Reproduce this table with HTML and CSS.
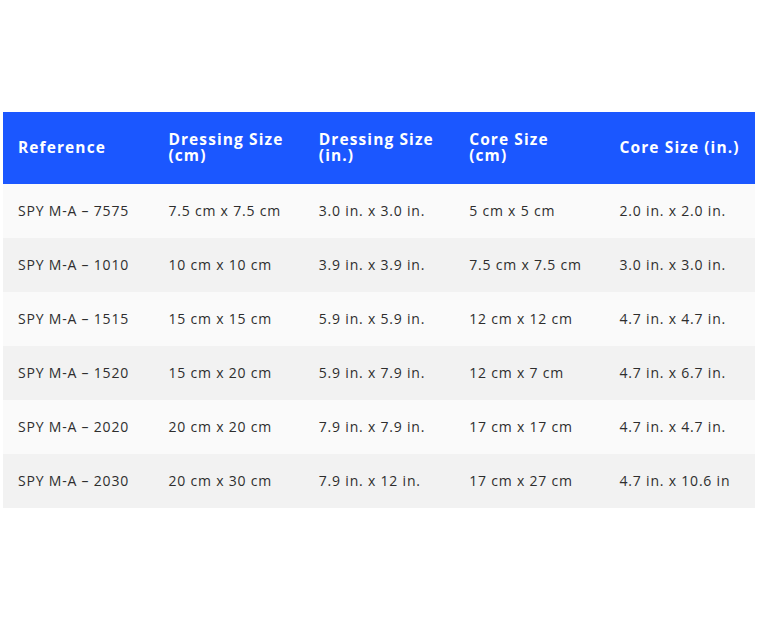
FILE: index.html
```html
<!DOCTYPE html>
<html>
<head>
<meta charset="utf-8">
<link rel="stylesheet" href="styles.css">
</head>
<body>
<div class="wrap">
<table class="sizes">
<thead>
<tr><th>Reference</th><th>Dressing Size (cm)</th><th>Dressing Size (in.)</th><th>Core Size (cm)</th><th>Core Size (in.)</th></tr>
</thead>
<tbody>
<tr><td>SPY M-A – 7575</td><td>7.5 cm x 7.5 cm</td><td>3.0 in. x 3.0 in.</td><td>5 cm x 5 cm</td><td>2.0 in. x 2.0 in.</td></tr>
<tr><td>SPY M-A – 1010</td><td>10 cm x 10 cm</td><td>3.9 in. x 3.9 in.</td><td>7.5 cm x 7.5 cm</td><td>3.0 in. x 3.0 in.</td></tr>
<tr><td>SPY M-A – 1515</td><td>15 cm x 15 cm</td><td>5.9 in. x 5.9 in.</td><td>12 cm x 12 cm</td><td>4.7 in. x 4.7 in.</td></tr>
<tr><td>SPY M-A – 1520</td><td>15 cm x 20 cm</td><td>5.9 in. x 7.9 in.</td><td>12 cm x 7 cm</td><td>4.7 in. x 6.7 in.</td></tr>
<tr><td>SPY M-A – 2020</td><td>20 cm x 20 cm</td><td>7.9 in. x 7.9 in.</td><td>17 cm x 17 cm</td><td>4.7 in. x 4.7 in.</td></tr>
<tr><td>SPY M-A – 2030</td><td>20 cm x 30 cm</td><td>7.9 in. x 12 in.</td><td>17 cm x 27 cm</td><td>4.7 in. x 10.6 in</td></tr>
</tbody>
</table>
</div>
</body>
</html>
```
FILE: styles.css
```css
html, body { margin: 0; padding: 0; background: #fff; }
body { font-family: "Open Sans", "DejaVu Sans", sans-serif; color: #2e2e2e; }
.wrap { padding: 112px 3px 0 3px; }
.sizes { width: 752px; border-collapse: collapse; table-layout: fixed; }
.sizes th { background: #1b57ff; color: #fff; font-weight: 700; font-size: 15.5px; line-height: 16px; letter-spacing: 1.1px; text-align: left; height: 72px; padding: 0 15px 2px; box-sizing: border-box; vertical-align: middle; }
.sizes td { font-size: 14px; letter-spacing: 0.8px; height: 54px; padding: 0 15px 2px; box-sizing: border-box; vertical-align: middle; }
.sizes tbody tr:nth-child(odd) td { background: #fafafa; }
.sizes tbody tr:nth-child(even) td { background: #f2f2f2; }
```
